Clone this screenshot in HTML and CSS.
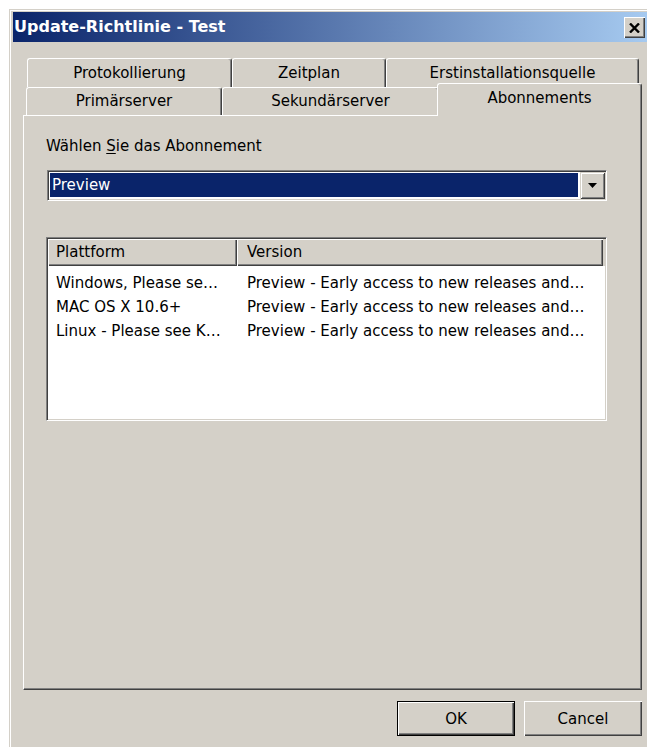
FILE: index.html
```html
<!DOCTYPE html>
<html lang="de">
<head>
<meta charset="utf-8">
<title>Update-Richtlinie - Test</title>
<link rel="stylesheet" href="styles.css">
</head>
<body>
<div class="window">
  <div class="titlebar">
    <span class="title">Update-Richtlinie - Test</span>
    <span class="close" aria-label="Schließen">
      <svg width="11" height="10" viewBox="0 0 11 10"><path d="M1 0.5 L10 9.5 M10 0.5 L1 9.5" stroke="#000" stroke-width="2.4" fill="none"/></svg>
    </span>
  </div>
  <div class="client">
    <div class="tabs">
      <div class="tabrow back">
        <div class="tab t-proto">Protokollierung</div>
        <div class="tab t-zeit">Zeitplan</div>
        <div class="tab t-erst">Erstinstallationsquelle</div>
      </div>
      <div class="tabrow front">
        <div class="tab t-prim">Primärserver</div>
        <div class="tab t-sek">Sekundärserver</div>
        <div class="tab t-abo active">Abonnements</div>
      </div>
      <div class="panel">
        <div class="label">Wählen <u>S</u>ie das Abonnement</div>
        <div class="combo">
          <div class="combo-value">Preview</div>
          <div class="combo-btn">
            <svg width="9" height="5" viewBox="0 0 9 5"><polygon points="0,0 9,0 4.5,5" fill="#000"/></svg>
          </div>
        </div>
        <div class="list">
          <div class="list-head">
            <div class="hcell c1">Plattform</div>
            <div class="hcell c2">Version</div>
          </div>
          <div class="list-body">
            <div class="row"><div class="cell c1">Windows, Please se…</div><div class="cell c2">Preview - Early access to new releases and…</div></div>
            <div class="row"><div class="cell c1">MAC OS X 10.6+</div><div class="cell c2">Preview - Early access to new releases and…</div></div>
            <div class="row"><div class="cell c1">Linux - Please see K…</div><div class="cell c2">Preview - Early access to new releases and…</div></div>
          </div>
        </div>
      </div>
    </div>
    <div class="buttons">
      <button class="btn default">OK</button>
      <button class="btn">Cancel</button>
    </div>
  </div>
</div>
</body>
</html>
```
FILE: styles.css
```css
html, body {
  margin: 0;
  padding: 0;
  background: #fff;
  overflow: hidden;
}

body {
  font-family: "DejaVu Sans", "Liberation Sans", sans-serif;
  font-size: 15px;
  line-height: 18px;
  color: #000;
}

/* dialog frame */
.window {
  margin: 9px 0 0 9px;
  width: 642px;
  height: 745px;
  box-sizing: border-box;
  background: #d4d0c8;
  padding: 3px 4px 4px 4px;
  box-shadow: inset 1px 1px #d4d0c8, inset 2px 2px #fff;
}

.titlebar {
  height: 30px;
  display: flex;
  justify-content: space-between;
  align-items: flex-start;
  background: linear-gradient(to right, #0a246a, #a6caf0);
}

.title {
  color: #fff;
  font-weight: bold;
  font-size: 16px;
  line-height: 30px;
  padding-left: 1px;
}

.close {
  width: 21px;
  height: 21px;
  margin: 5px 2px 0 0;
  box-sizing: border-box;
  background: #d4d0c8;
  box-shadow: inset 1px 1px #fff, inset -1px -1px #404040, inset -2px -2px #808080;
  display: flex;
  align-items: center;
  justify-content: center;
}

.client {
  padding: 16px 0 0 10px;
}

/* tab control */
.tabs {
  width: 619px;
}

.tabrow {
  display: flex;
  align-items: flex-start;
}

.back {
  height: 29px;
  margin-left: 4px;
}

.front {
  height: 28px;
  margin-left: 3px;
}

.tab {
  box-sizing: border-box;
  height: 100%;
  background: #d4d0c8;
  border-top: 1px solid #fff;
  border-left: 1px solid #fff;
  border-right: 1px solid #404040;
  border-radius: 3px 3px 0 0;
  box-shadow: inset -1px 0 #808080;
  text-align: center;
  white-space: nowrap;
}

.back .tab { padding-top: 5px; }
.front .tab { padding-top: 4px; }

.t-proto { width: 205px; }
.t-zeit { width: 154px; }
.t-erst { width: 253px; }
.t-prim { width: 196px; }
.t-sek { width: 217px; }

.front .t-abo {
  width: 205px;
  height: 33px;
  margin: -4px 0 0 -2px;
  padding-top: 5px;
  position: relative;
  z-index: 1;
}

.panel {
  box-sizing: border-box;
  height: 575px;
  border-top: 1px solid #fff;
  border-left: 1px solid #fff;
  border-right: 1px solid #404040;
  border-bottom: 1px solid #404040;
  box-shadow: inset -1px -1px #808080;
  padding: 21px 0 0 22px;
}

.label u {
  text-decoration-thickness: 1px;
  text-underline-offset: 2px;
}

/* drop-down list */
.combo {
  margin: 15px 0 0 1px;
  width: 560px;
  height: 31px;
  box-sizing: border-box;
  border-top: 1px solid #808080;
  border-left: 1px solid #808080;
  border-right: 1px solid #fff;
  border-bottom: 1px solid #fff;
  box-shadow: inset 1px 1px #404040, inset -1px -1px #d4d0c8;
  background: #fff;
  padding: 1px;
  display: flex;
}

.combo-value {
  flex: 1;
  margin: 1px 2px 2px 1px;
  background: #0a246a;
  color: #fff;
  line-height: 24px;
  padding-left: 2px;
}

.combo-btn {
  width: 25px;
  box-sizing: border-box;
  background: #d4d0c8;
  box-shadow: inset 1px 1px #d4d0c8, inset -1px -1px #404040, inset 2px 2px #fff, inset -2px -2px #808080;
  display: flex;
  align-items: center;
  justify-content: center;
}

/* list view */
.list {
  margin-top: 36px;
  width: 561px;
  height: 184px;
  box-sizing: border-box;
  border-top: 1px solid #808080;
  border-left: 1px solid #808080;
  border-right: 1px solid #fff;
  border-bottom: 1px solid #fff;
  box-shadow: inset 1px 1px #404040, inset -1px -1px #d4d0c8;
  background: #fff;
  padding: 1px;
}

.list-head {
  display: flex;
  height: 27px;
  background: #d4d0c8;
}

.hcell {
  box-sizing: border-box;
  height: 27px;
  line-height: 26px;
  box-shadow: inset 1px 1px #fff, inset -1px -1px #404040, inset -2px -2px #808080;
}

.list-head .c1 { width: 189px; padding-left: 8px; }
.list-head .c2 { width: 366px; padding-left: 10px; }

.list-body {
  padding-top: 5px;
}

.row {
  display: flex;
  height: 24px;
  line-height: 24px;
  white-space: nowrap;
}

.row .c1 { width: 189px; padding-left: 8px; box-sizing: border-box; }
.row .c2 { padding-left: 10px; }

/* dialog buttons */
.buttons {
  width: 619px;
  margin-top: 11px;
  display: flex;
  justify-content: flex-end;
  gap: 9px;
}

.btn {
  width: 118px;
  height: 35px;
  box-sizing: border-box;
  padding: 0;
  border: none;
  background: #d4d0c8;
  font: inherit;
  color: #000;
  box-shadow: inset 1px 1px #fff, inset -1px -1px #404040, inset -2px -2px #808080;
}

.btn.default {
  border: 1px solid #000;
}
```
